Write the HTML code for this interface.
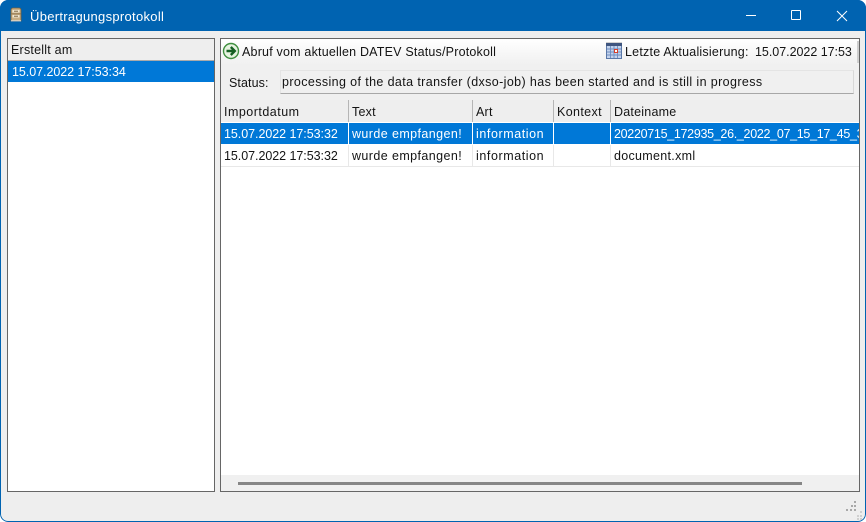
<!DOCTYPE html>
<html><head><meta charset="utf-8">
<style>
html,body{margin:0;padding:0;background:#fff}
#w{position:relative;width:866px;height:522px;overflow:hidden;background:#eee;font:12.5px "Liberation Sans",sans-serif;color:#141414;border-radius:8px}
#w div,#w span.t{position:absolute}
.t{white-space:nowrap;line-height:16px;letter-spacing:.22px}
.w{color:#fff}
.d{letter-spacing:-.05px}
.e{letter-spacing:.41px}
.i{letter-spacing:.58px}
</style></head><body>
<div id="w">
<div style="left:0;top:0;width:866px;height:31px;background:#0063b1"></div>
<svg style="position:absolute;left:8px;top:7px" width="16" height="16" viewBox="0 0 16 16"><path d="M3 3.5Q3 1 5 1H11Q13 1 13 3.5V14H3Z" fill="#c9ae84" stroke="#7d6238" stroke-width=".8"/><rect x="4.5" y="3" width="7" height="2.5" fill="#f1e6d0"/><rect x="4.5" y="8" width="7" height="2.5" fill="#f1e6d0"/><path d="M6 4.2H10M6 9.2H10" stroke="#6b532e" stroke-width=".9"/><rect x="3.5" y="6.4" width="9" height=".9" fill="#8a7048"/><rect x="3" y="13" width="10" height="1.5" fill="#fff" opacity=".55"/></svg>
<span class="t" style="left:30px;top:9px;color:#fff;font-size:13px;letter-spacing:.3px">Übertragungsprotokoll</span>
<div style="left:746px;top:15px;width:10px;height:1px;background:#fff"></div>
<div style="left:791px;top:10px;width:8px;height:8px;border:1px solid #fff;border-radius:1px"></div>
<svg style="position:absolute;left:836px;top:10px" width="12" height="12" viewBox="0 0 12 12"><path d="M1 1L11 11M11 1L1 11" stroke="#fff" stroke-width="1"/></svg>

<div style="left:7px;top:38px;width:206px;height:452px;border:1px solid #666;background:#fff"></div>
<div style="left:8px;top:39px;width:206px;height:21px;background:#eee;border-bottom:1px solid #aaa"></div>
<span class="t" style="left:11px;top:42px">Erstellt am</span>
<div style="left:8px;top:61px;width:206px;height:21px;background:#0078d7"></div>
<span class="t w d" style="left:12px;top:64px">15.07.2022 17:53:34</span>

<div style="left:220px;top:38px;width:638px;height:452px;border:1px solid #666;background:#fff"></div>
<div style="left:221px;top:39px;width:638px;height:26px;background:linear-gradient(#fff,#f0f0f0)"></div>
<div style="left:857px;top:41px;width:2px;height:22px;background:#cfcfcf"></div>
<div style="left:221px;top:65px;width:638px;height:35px;background:#f0f0f0"></div>
<svg style="position:absolute;left:222px;top:42px" width="18" height="18" viewBox="0 0 18 18"><circle cx="9" cy="9" r="7.5" fill="#e6f3e0" stroke="#3f8f3f" stroke-width="1.4"/><path d="M4.5 9H12M8.8 5L12.8 9L8.8 13" fill="none" stroke="#155f22" stroke-width="2.4"/></svg>
<span class="t" style="left:242px;top:44px;letter-spacing:.2px">Abruf vom aktuellen DATEV Status/Protokoll</span>
<svg style="position:absolute;left:606px;top:42px" width="16" height="17" viewBox="0 0 16 17"><rect x=".5" y="2.5" width="15" height="14" fill="#c3d3ec" stroke="#5a78a8"/><rect x="0" y="1" width="16" height="3" fill="#3f5680"/><path d="M1 1V.2M3 1V.2M5 1V.2M7 1V.2M9 1V.2M11 1V.2M13 1V.2M15 1V.2" stroke="#888" stroke-width="1"/><path d="M1 7H15M1 10H15M1 13H15M4.5 4V16M8 4V16M11.5 4V16" stroke="#6f8dbf" stroke-width=".9"/><rect x="8.5" y="7.5" width="3" height="3" fill="#fff" stroke="#d8402a"/></svg>
<span class="t" style="left:625px;top:44px">Letzte Aktualisierung:</span>
<span class="t" style="left:755px;top:44px;letter-spacing:-.03px">15.07.2022 17:53</span>
<span class="t" style="left:229px;top:75px;letter-spacing:.1px">Status:</span>
<div style="left:280px;top:70px;width:572px;height:22px;border:1px solid;border-color:#e4e4e4 #d8d8d8 #a8a8a8 #e4e4e4;background:#f0f0f0"></div>
<span class="t" style="left:282px;top:74px;letter-spacing:.385px">processing of the data transfer (dxso-job) has been started and is still in progress</span>

<div style="left:221px;top:100px;width:638px;height:22px;background:#eee"></div>
<div style="left:348px;top:100px;width:1px;height:22px;background:#b5b5b5"></div>
<div style="left:472px;top:100px;width:1px;height:22px;background:#b5b5b5"></div>
<div style="left:553px;top:100px;width:1px;height:22px;background:#b5b5b5"></div>
<div style="left:610px;top:100px;width:1px;height:22px;background:#b5b5b5"></div>
<span class="t" style="left:224px;top:104px;letter-spacing:.49px">Importdatum</span>
<span class="t" style="left:352px;top:104px">Text</span>
<span class="t" style="left:476px;top:104px">Art</span>
<span class="t" style="left:557px;top:104px;letter-spacing:.36px">Kontext</span>
<span class="t" style="left:614px;top:104px">Dateiname</span>

<div style="left:221px;top:123px;width:638px;height:21px;background:#0078d7"></div>
<div style="left:348px;top:123px;width:1px;height:21px;background:#fff"></div>
<div style="left:472px;top:123px;width:1px;height:21px;background:#fff"></div>
<div style="left:553px;top:123px;width:1px;height:21px;background:#fff"></div>
<div style="left:610px;top:123px;width:1px;height:21px;background:#fff"></div>
<span class="t w d" style="left:224px;top:126px">15.07.2022 17:53:32</span>
<span class="t w e" style="left:352px;top:126px">wurde empfangen!</span>
<span class="t w i" style="left:476px;top:126px">information</span>
<div style="left:611px;top:123px;width:248px;height:21px;overflow:hidden"><span class="t w" style="position:absolute;left:3px;top:3px;letter-spacing:-.3px">20220715_172935_26._2022_07_15_17_45_32.zip</span></div>

<div style="left:221px;top:166px;width:638px;height:1px;background:#e8e8e8"></div>
<div style="left:348px;top:145px;width:1px;height:21px;background:#e8e8e8"></div>
<div style="left:472px;top:145px;width:1px;height:21px;background:#e8e8e8"></div>
<div style="left:553px;top:145px;width:1px;height:21px;background:#e8e8e8"></div>
<div style="left:610px;top:145px;width:1px;height:21px;background:#e8e8e8"></div>
<span class="t d" style="left:224px;top:148px">15.07.2022 17:53:32</span>
<span class="t e" style="left:352px;top:148px">wurde empfangen!</span>
<span class="t i" style="left:476px;top:148px">information</span>
<span class="t" style="left:614px;top:148px;letter-spacing:.3px">document.xml</span>

<div style="left:221px;top:475px;width:638px;height:16px;background:#f0f0f0"></div>
<div style="left:238px;top:482px;width:564px;height:3px;background:#868686"></div>

<svg style="position:absolute;left:844px;top:498px" width="22" height="24" viewBox="0 0 22 24"><g fill="#a8a8a8"><rect x="10" y="3" width="2" height="2"/><rect x="7" y="7" width="2" height="2"/><rect x="10" y="7" width="2" height="2"/><rect x="2" y="11" width="2" height="2"/><rect x="6" y="11" width="2" height="2"/><rect x="10" y="11" width="2" height="2"/></g><g fill="#cfcfcf"><rect x="16" y="13" width="2" height="2"/><rect x="13" y="17" width="2" height="2"/><rect x="16" y="17" width="2" height="2"/><rect x="13" y="20" width="2" height="2"/><rect x="16" y="20" width="2" height="2"/></g></svg>
<div style="left:0;top:0;width:864px;height:520px;border:1px solid #0063b1;border-radius:8px"></div>
</div>
</body></html>
